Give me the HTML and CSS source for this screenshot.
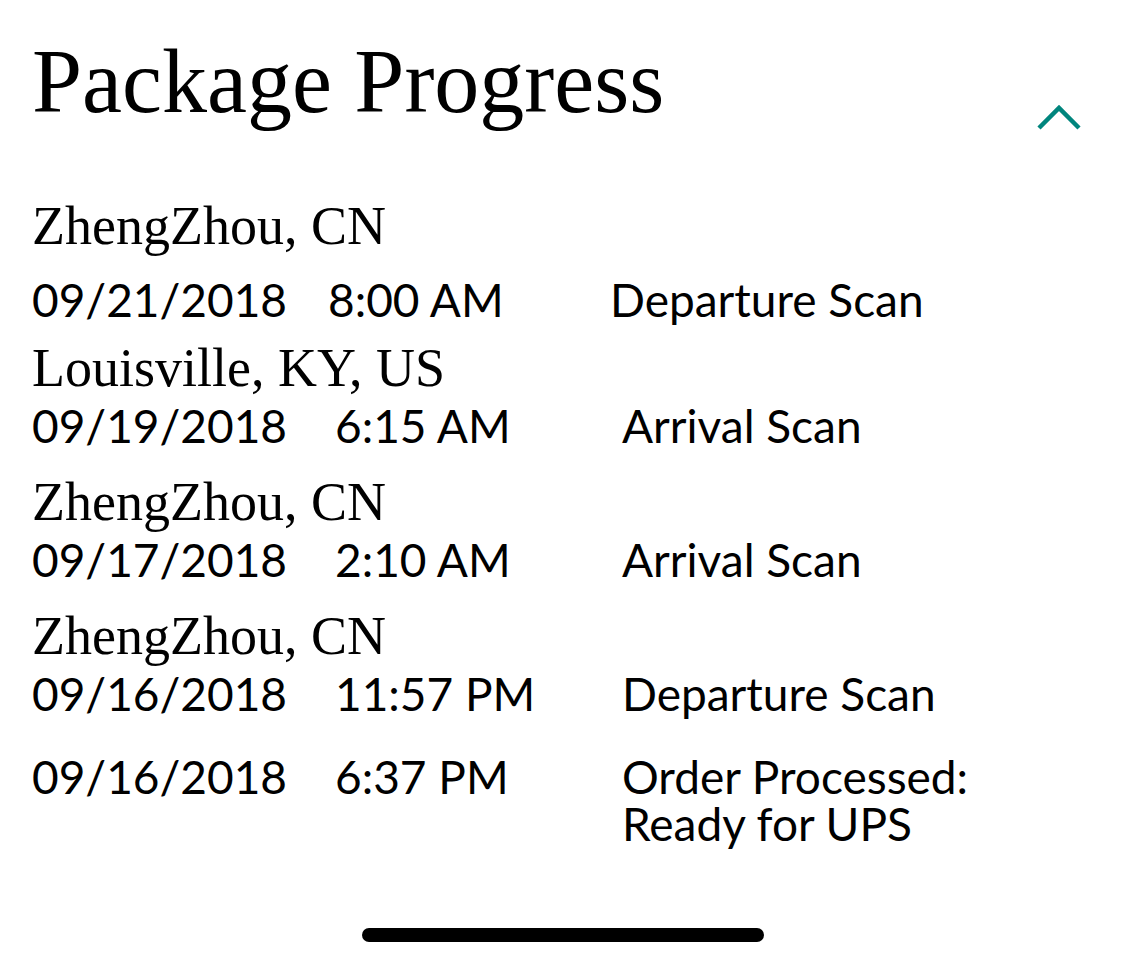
FILE: index.html
```html
<!DOCTYPE html>
<html lang="en">
<head>
    <meta charset="utf-8">
    <title>Package Progress</title>
    <link rel="stylesheet" href="styles.css">
</head>
<body>
    <div class="screen">
        <div class="header">
            <h1>Package Progress</h1>
            <svg class="toggle" width="46" height="28" viewBox="0 0 46 28">
                <polyline points="3,24 23,4 43,24" fill="none" stroke="#00857d" stroke-width="4.5" />
            </svg>
        </div>

        <div class="entry first">
            <div class="city">ZhengZhou, CN</div>
            <div class="scan">
                <span>09/21/2018</span>
                <span>8:00 AM</span>
                <span>Departure Scan</span>
            </div>
        </div>

        <div class="entry">
            <div class="city">Louisville, KY, US</div>
            <div class="scan">
                <span>09/19/2018</span>
                <span>6:15 AM</span>
                <span>Arrival Scan</span>
            </div>
        </div>

        <div class="entry">
            <div class="city">ZhengZhou, CN</div>
            <div class="scan">
                <span>09/17/2018</span>
                <span>2:10 AM</span>
                <span>Arrival Scan</span>
            </div>
        </div>

        <div class="entry">
            <div class="city">ZhengZhou, CN</div>
            <div class="scan">
                <span>09/16/2018</span>
                <span>11:57 PM</span>
                <span>Departure Scan</span>
            </div>
        </div>

        <div class="entry last">
            <div class="scan">
                <span>09/16/2018</span>
                <span>6:37 PM</span>
                <span class="status-multi">
                    <span>Order Processed:</span>
                    <span>Ready for UPS</span>
                </span>
            </div>
        </div>

        <div class="home-bar"></div>
    </div>
</body>
</html>
```

FILE: styles.css
```css
body {
    margin: 0;
    padding: 0;
    background: #ffffff;
    color: #000000;
}
.screen {
    padding: 38px 43px 0 32px;
}
.header {
    display: flex;
    justify-content: space-between;
    align-items: flex-start;
    height: 88px;
}
h1 {
    margin: 0;
    font-family: "Liberation Serif", serif;
    font-weight: normal;
    font-size: 90px;
    line-height: 88px;
}
.toggle {
    margin-top: 66px;
}
.entry {
    margin-top: 27px;
}
.entry.first {
    margin-top: 74px;
}
.entry.first + .entry {
    margin-top: 19px;
}
.city {
    font-family: "Liberation Serif", serif;
    font-size: 54px;
    line-height: 52px;
}
.scan {
    display: grid;
    grid-template-columns: 303px 287px auto;
    margin-top: 9px;
    font-family: Lato, "Liberation Sans", sans-serif;
    font-size: 46px;
    line-height: 46px;
}
.entry.first .scan {
    grid-template-columns: 296px 282px auto;
    margin-top: 25px;
}
.entry.last {
    margin-top: 37px;
}
.entry.last .scan {
    margin-top: 0;
}
.status-multi {
    display: flex;
    flex-direction: column;
    gap: 1px;
}
.home-bar {
    width: 402px;
    height: 14px;
    border-radius: 7px;
    background: #000000;
    margin: 81px auto 0;
    position: relative;
    left: 6px;
}
```
